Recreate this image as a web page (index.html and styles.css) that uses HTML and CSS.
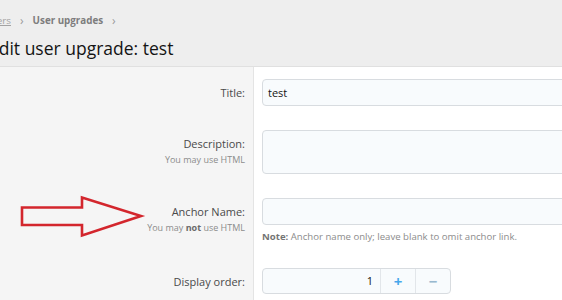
FILE: index.html
```html
<!DOCTYPE html>
<html>
<head>
<meta charset="utf-8">
<link rel="stylesheet" href="styles.css">
</head>
<body>
<div class="header">
  <nav class="crumbs">
    <a class="crumb-link" href="#">Users</a>
    <span class="sep">›</span>
    <span class="crumb">User upgrades</span>
    <span class="sep">›</span>
  </nav>
  <h1 class="title">Edit user upgrade: test</h1>
</div>
<div class="block">
  <div class="row">
    <div class="label-cell"><div class="label">Title:</div></div>
    <div class="field-cell"><div class="input">test</div></div>
  </div>
  <div class="row">
    <div class="label-cell"><div class="label">Description:</div><div class="hint">You may use HTML</div></div>
    <div class="field-cell"><div class="input textarea"></div></div>
  </div>
  <div class="row">
    <div class="label-cell"><div class="label">Anchor Name:</div><div class="hint">You may <b>not</b> use HTML</div></div>
    <div class="field-cell"><div class="input"></div><div class="note"><b>Note:</b> Anchor name only; leave blank to omit anchor link.</div></div>
  </div>
  <div class="row">
    <div class="label-cell"><div class="label">Display order:</div></div>
    <div class="field-cell">
      <div class="number">
        <div class="num-value">1</div>
        <div class="num-btn plus">+</div>
        <div class="num-btn minus">−</div>
      </div>
    </div>
  </div>
</div>
<svg class="arrow" width="562" height="300" viewBox="0 0 562 300">
  <polygon points="22,207.5 82,207.5 82,197.5 141,216 82,235.5 82,225 22,225" fill="none" stroke="#d3262d" stroke-width="2.6" stroke-linejoin="miter"/>
</svg>
</body>
</html>
```
FILE: styles.css
```css
html, body {
  margin: 0;
  padding: 0;
}
body {
  position: relative;
  width: 562px;
  height: 300px;
  overflow: hidden;
  background: #eeeeee;
  font-family: "Open Sans", "Noto Sans", sans-serif;
  color: #141414;
}
.header {
  margin-left: -11px;
  padding-top: 13px;
}
.crumbs {
  display: flex;
  align-items: center;
  margin-left: -4px;
  font-size: 9.8px;
  line-height: 16px;
  font-weight: 700;
  color: #7d7d7d;
}
.crumb-link {
  color: #a3a3a3;
  font-weight: 400;
  text-decoration: underline;
}
.sep {
  margin: 0 9px;
  color: #9a9a9a;
  font-size: 12px;
  font-weight: 400;
}
.title {
  margin: 6px 0 0;
  font-size: 17.5px;
  line-height: 26px;
  font-weight: 400;
  color: #141414;
}
.block {
  margin-top: 5px;
  border-top: 1px solid #e0e0e0;
  background: #ffffff;
  width: 900px;
}
.row {
  display: grid;
  grid-template-columns: 254px 1fr;
}
.label-cell {
  background: #f5f5f5;
  border-right: 1px solid #e4e4e4;
  padding: 16.5px 8px 12px 0;
  text-align: right;
}
.label {
  font-size: 11px;
  line-height: 18px;
  color: #4a4a4a;
}
.hint {
  font-size: 9px;
  line-height: 13px;
  color: #8c8c8c;
}
.hint b {
  color: #6a6a6a;
}
.field-cell {
  padding: 12px 0 12px 8px;
}
.input {
  box-sizing: border-box;
  height: 27px;
  width: 400px;
  border: 1px solid #d8dce0;
  border-radius: 4px;
  background: #f8fbfd;
  font-size: 11px;
  line-height: 25px;
  padding: 0 5px;
  color: #141414;
}
.textarea {
  height: 44px;
}
.note {
  margin-top: 5px;
  font-size: 9.6px;
  line-height: 14px;
  color: #8c8c8c;
}
.note b {
  color: #747474;
}
.number {
  box-sizing: border-box;
  display: flex;
  width: 189px;
  height: 26px;
  border: 1px solid #d8dce0;
  border-radius: 4px;
  background: #f8fbfd;
  overflow: hidden;
}
.num-value {
  flex: 1;
  text-align: right;
  padding-right: 7px;
  font-size: 11px;
  line-height: 24px;
}
.num-btn {
  width: 34px;
  border-left: 1px solid #e2e6ea;
  text-align: center;
  font-size: 15px;
  line-height: 24px;
  font-weight: 700;
}
.plus {
  color: #47a7eb;
}
.minus {
  color: #98b8cf;
}
.arrow {
  position: absolute;
  left: 0;
  top: 0;
  pointer-events: none;
}
```
